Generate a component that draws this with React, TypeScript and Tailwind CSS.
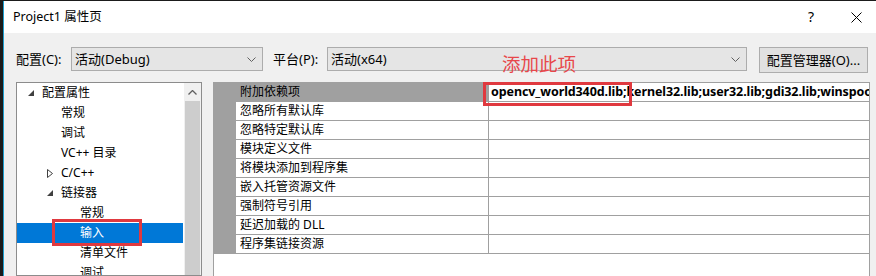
import React from "react";

const tree: { label: string; level: number; exp?: "open" | "closed"; selected?: boolean }[] = [
  { label: "配置属性", level: 0, exp: "open" },
  { label: "常规", level: 1 },
  { label: "调试", level: 1 },
  { label: "VC++ 目录", level: 1 },
  { label: "C/C++", level: 1, exp: "closed" },
  { label: "链接器", level: 1, exp: "open" },
  { label: "常规", level: 2 },
  { label: "输入", level: 2, selected: true },
  { label: "清单文件", level: 2 },
  { label: "调试", level: 2 },
];

const levelPad = ["pl-[9px]", "pl-[28px]", "pl-[47px]"];

const rows = [
  "附加依赖项",
  "忽略所有默认库",
  "忽略特定默认库",
  "模块定义文件",
  "将模块添加到程序集",
  "嵌入托管资源文件",
  "强制符号引用",
  "延迟加载的 DLL",
  "程序集链接资源",
];

function Chevron() {
  return (
    <svg width="9" height="5" viewBox="0 0 9 5" className="shrink-0">
      <polyline points="0.5,0.5 4.5,4.5 8.5,0.5" fill="none" stroke="#606060" strokeWidth="1" />
    </svg>
  );
}

function Combo({ text, w }: { text: string; w: string }) {
  return (
    <div className={`${w} h-[24px] bg-[#e5e5e5] border border-[#acacac] flex items-center justify-between pl-[3px] pr-[6px]`}>
      <span className="text-[13px] leading-none text-black">{text}</span>
      <Chevron />
    </div>
  );
}

export default function App() {
  return (
    <div className="w-[876px] h-[276px] overflow-hidden bg-[#1b1b1b] relative font-[family-name:'Noto_Sans','Noto_Sans_CJK_SC',sans-serif] text-black">
      <div className="ml-[3px] mt-[1px] h-[275px] border-l border-[#1e9fcf] flex flex-col">
        {/* title bar */}
        <div className="h-[32px] bg-white flex items-center pl-[9px] shrink-0">
          <span className="text-[12.5px] leading-none">Project1 属性页</span>
          <span className="ml-auto text-[14px] leading-none mr-[37px]">?</span>
          <svg width="11" height="11" viewBox="0 0 11 11" className="mr-[14px]">
            <line x1="0.5" y1="0.5" x2="10.5" y2="10.5" stroke="#000" strokeWidth="1" />
            <line x1="10.5" y1="0.5" x2="0.5" y2="10.5" stroke="#000" strokeWidth="1" />
          </svg>
        </div>
        {/* body */}
        <div className="flex-1 bg-[#f0f0f0] pl-[12px] pt-[14px] flex flex-col overflow-hidden">
          <div className="flex items-start h-[26px] shrink-0">
            <div className="w-[55px] h-[24px] flex items-center text-[13px] leading-none">配置(C):</div>
            <Combo text="活动(Debug)" w="w-[192px]" />
            <div className="w-[54px] ml-[10px] h-[24px] flex items-center text-[13px] leading-none">平台(P):</div>
            <Combo text="活动(x64)" w="w-[420px]" />
            <div className="ml-[12px] w-[109px] h-[26px] bg-[#e1e1e1] border border-[#adadad] flex items-center justify-center text-[13px] leading-none">
              配置管理器(O)...
            </div>
          </div>
          <div className="mt-[9px] flex flex-1 min-h-0">
            {/* tree */}
            <div className="w-[186px] border border-[#8c8c8c] bg-white flex overflow-hidden">
              <div className="flex-1 flex flex-col">
                {tree.map((t, i) => (
                  <div
                    key={i}
                    className={`relative shrink-0 h-[20px] flex items-center ${levelPad[t.level]} ${t.selected ? "bg-[#0078d7] text-white ml-[1px] -translate-x-[1px]" : ""}`}
                  >
                    <span className="w-[16px] flex items-center pl-[2px]">
                      {t.exp === "open" && (
                        <svg width="6" height="6" viewBox="0 0 6 6">
                          <polygon points="6,0 6,6 0,6" fill="#404040" />
                        </svg>
                      )}
                      {t.exp === "closed" && (
                        <svg width="6" height="9" viewBox="0 0 6 9">
                          <polygon points="0.5,0.5 5.5,4.5 0.5,8.5" fill="none" stroke="#404040" strokeWidth="1" />
                        </svg>
                      )}
                    </span>
                    <span className="text-[12px] leading-none whitespace-nowrap">{t.label}</span>
                    {t.selected && (
                      <div className="absolute left-[35px] top-[-4px] w-[90px] h-[27px] border-[3px] border-[#e0393f]" />
                    )}
                  </div>
                ))}
              </div>
              <div className="w-[17px] bg-[#f0f0f0] flex flex-col">
                <div className="h-[18px] shrink-0 flex items-center justify-center">
                  <svg width="9" height="5" viewBox="0 0 9 5">
                    <polyline points="0.5,4.5 4.5,0.5 8.5,4.5" fill="none" stroke="#606060" strokeWidth="1.3" />
                  </svg>
                </div>
                <div className="flex-1 mx-[1px] bg-[#cdcdcd]" />
              </div>
            </div>
            {/* property grid */}
            <div className="ml-[11px] w-[657px] border-l border-r border-t border-[#a0a0a0] bg-white flex flex-col overflow-hidden">
              {rows.map((r, i) => (
                <div key={i} className="h-[19px] shrink-0 flex">
                  <div className="w-[22px] bg-[#a0a0a0]" />
                  <div
                    className={`w-[253px] border-b border-r border-[#a0a0a0] flex items-center pl-[4px] text-[12px] leading-none whitespace-nowrap ${i === 0 ? "bg-[#a0a0a0]" : ""}`}
                  >
                    {r}
                  </div>
                  <div className="flex-1 min-w-0 border-b border-[#a0a0a0] flex items-center pl-[2px] overflow-hidden">
                    {i === 0 && (
                      <span className="text-[12.5px] font-bold leading-none whitespace-nowrap tracking-[-0.1px]">
                        opencv_world340d.lib;kernel32.lib;user32.lib;gdi32.lib;winspool.lib;comdlg32.lib
                      </span>
                    )}
                  </div>
                </div>
              ))}
            </div>
          </div>
        </div>
      </div>
      {/* annotations */}
      <div className="absolute left-[502px] top-[54px] text-[18.5px] leading-none text-[#e8474a] font-[family-name:'Noto_Sans_CJK_SC',sans-serif]">
        添加此项
      </div>
      <div className="absolute left-[483px] top-[82px] w-[149px] h-[24px] border-[3px] border-[#e0393f]" />
    </div>
  );
}
